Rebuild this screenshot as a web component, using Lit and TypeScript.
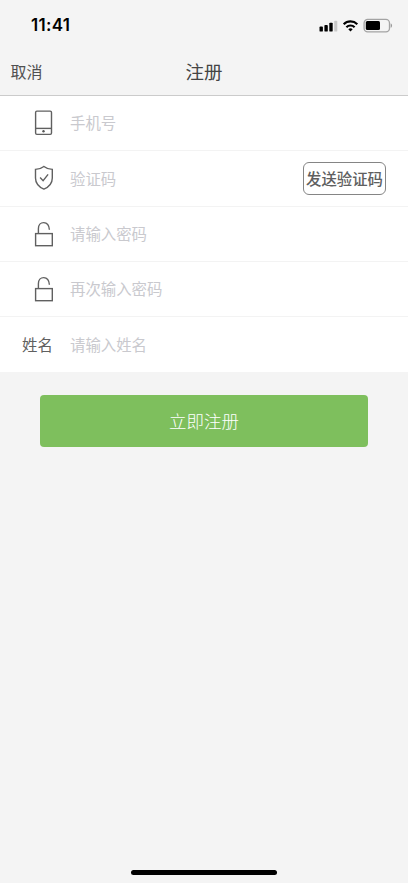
import { LitElement, html, css, svg } from "lit";
import { customElement, property } from "lit/decorators.js";

const icons: Record<string, unknown> = {
  phone: svg`<rect x="5.600" y="2.100" width="15.900" height="23.300" rx="1.300"/><path d="M5.600 19.400h15.900"/><circle cx="13.500" cy="22.300" r="1.200" fill="#555" stroke="none"/>`,
  shield: svg`<path d="M13.900 2.500C11.600 4.300 8.800 5.300 5.500 5.400v8.500c0 5.200 3.500 9 8.400 11.200 4.900-2.200 8.400-6 8.400-11.200V5.400C19.100 5.300 16.200 4.300 13.900 2.500Z"/><path d="M10.100 13.600l3 3.100 5-6.300"/>`,
  lock: svg`<rect x="5.600" y="13.600" width="16.700" height="12.100"/><path d="M8.400 13.600V8.700c0-3.700 2.200-6.100 5.300-6.100s5.400 2.600 5.700 7.200"/>`,
};

@customElement("status-bar")
class StatusBar extends LitElement {
  static styles = css`
    :host { display: flex; justify-content: space-between; align-items: center; height: 50px; padding: 0 15px 0 31px; box-sizing: border-box; }
    .time { font: 600 17px/20px Inter, sans-serif; letter-spacing: 0.300px; color: #000; }
    svg { display: block; }
  `;
  render() {
    return html`<span class="time">11:41</span>
      <svg width="74" height="16" viewBox="0 0 74 16">
        <rect x="0.500" y="9.600" width="3.400" height="5" rx="0.900"/>
        <rect x="5.400" y="7.900" width="3.400" height="6.700" rx="0.900"/>
        <rect x="10.300" y="5.700" width="3.400" height="8.900" rx="0.900"/>
        <rect x="15.200" y="3.700" width="3.100" height="10.900" rx="0.900" fill="#c8c8c8"/>
        <g fill="none" stroke="#000" stroke-width="2.200">
          <path d="M24.700 7.200a9.700 9.700 0 0 1 13.600 0"/>
          <path d="M27.400 10.200a5.800 5.800 0 0 1 8.200 0"/>
        </g>
        <path d="M31.500 14.600l-2.200-2.300a3.100 3.100 0 0 1 4.400 0Z"/>
        <rect x="45.100" y="2.400" width="25.400" height="12.400" rx="3.600" fill="none" stroke="#a3a3a3" stroke-width="1.300"/>
        <rect x="46.800" y="4" width="14.200" height="9" rx="1.500"/>
        <path d="M71.700 6.500c1.800.6 1.800 3.700 0 4.300Z" fill="#999"/>
      </svg>`;
  }
}

@customElement("form-row")
class FormRow extends LitElement {
  @property() icon = "";
  @property() label = "";
  @property() hint = "";
  static styles = css`
    :host { display: flex; align-items: center; height: 55.300px; box-sizing: border-box; padding-right: 22px; border-bottom: 1px solid #f3f3f3; background: #fff; }
    :host(:last-of-type) { border-bottom-color: #fff; }
    .lead { width: 70px; box-sizing: border-box; padding-left: 30px; flex: none; }
    .lead.text { padding: 0 0 1px 22px; color: #606060; }
    .hint { flex: 1; color: #c9c9ce; padding-bottom: 1.500px; }
    svg { display: block; fill: none; stroke: #606060; stroke-width: 1.400; }
  `;
  render() {
    return html`${this.icon
        ? html`<div class="lead"><svg width="28" height="28" viewBox="0 0 28 28">${icons[this.icon]}</svg></div>`
        : html`<div class="lead text">${this.label}</div>`}
      <span class="hint">${this.hint}</span><slot></slot>`;
  }
}

@customElement("app-root")
class AppRoot extends LitElement {
  static styles = css`
    :host { display: flex; flex-direction: column; height: 883px; background: #f4f4f4; overflow: hidden; font: 15.400px/22px "Noto Sans CJK SC", sans-serif; }
    .nav { display: grid; grid-template-columns: 1fr auto 1fr; align-items: center; height: 46px; box-sizing: border-box; padding: 0 10.500px 3px; border-bottom: 1px solid #cbcbcb; color: #505050; }
    .cancel { font-size: 16px; }
    .title { font-size: 18.500px; color: #444; }
    .code { box-sizing: border-box; width: 83px; height: 33px; padding: 0; border: 1px solid #858585; border-radius: 6px; background: #fff; color: #606060; font: 500 15.400px/30px "Noto Sans CJK SC", sans-serif; white-space: nowrap; display: flex; justify-content: center; }
    .submit { height: 52px; margin: 22.500px 40px 0; padding: 0; border: 0; border-radius: 4px; background: #7ebf5d; color: #fff; font: 300 17.500px/52px "Noto Sans CJK SC", sans-serif; }
    .home { width: 146px; height: 5px; border-radius: 3px; background: #000; margin: auto auto 8px; }
  `;
  render() {
    return html`<status-bar></status-bar>
      <div class="nav"><span class="cancel">取消</span><span class="title">注册</span></div>
      <div class="form">
        <form-row icon="phone" hint="手机号"></form-row>
        <form-row icon="shield" hint="验证码"><button class="code">发送验证码</button></form-row>
        <form-row icon="lock" hint="请输入密码"></form-row>
        <form-row icon="lock" hint="再次输入密码"></form-row>
        <form-row label="姓名" hint="请输入姓名"></form-row>
      </div>
      <button class="submit">立即注册</button>
      <div class="home"></div>`;
  }
}
